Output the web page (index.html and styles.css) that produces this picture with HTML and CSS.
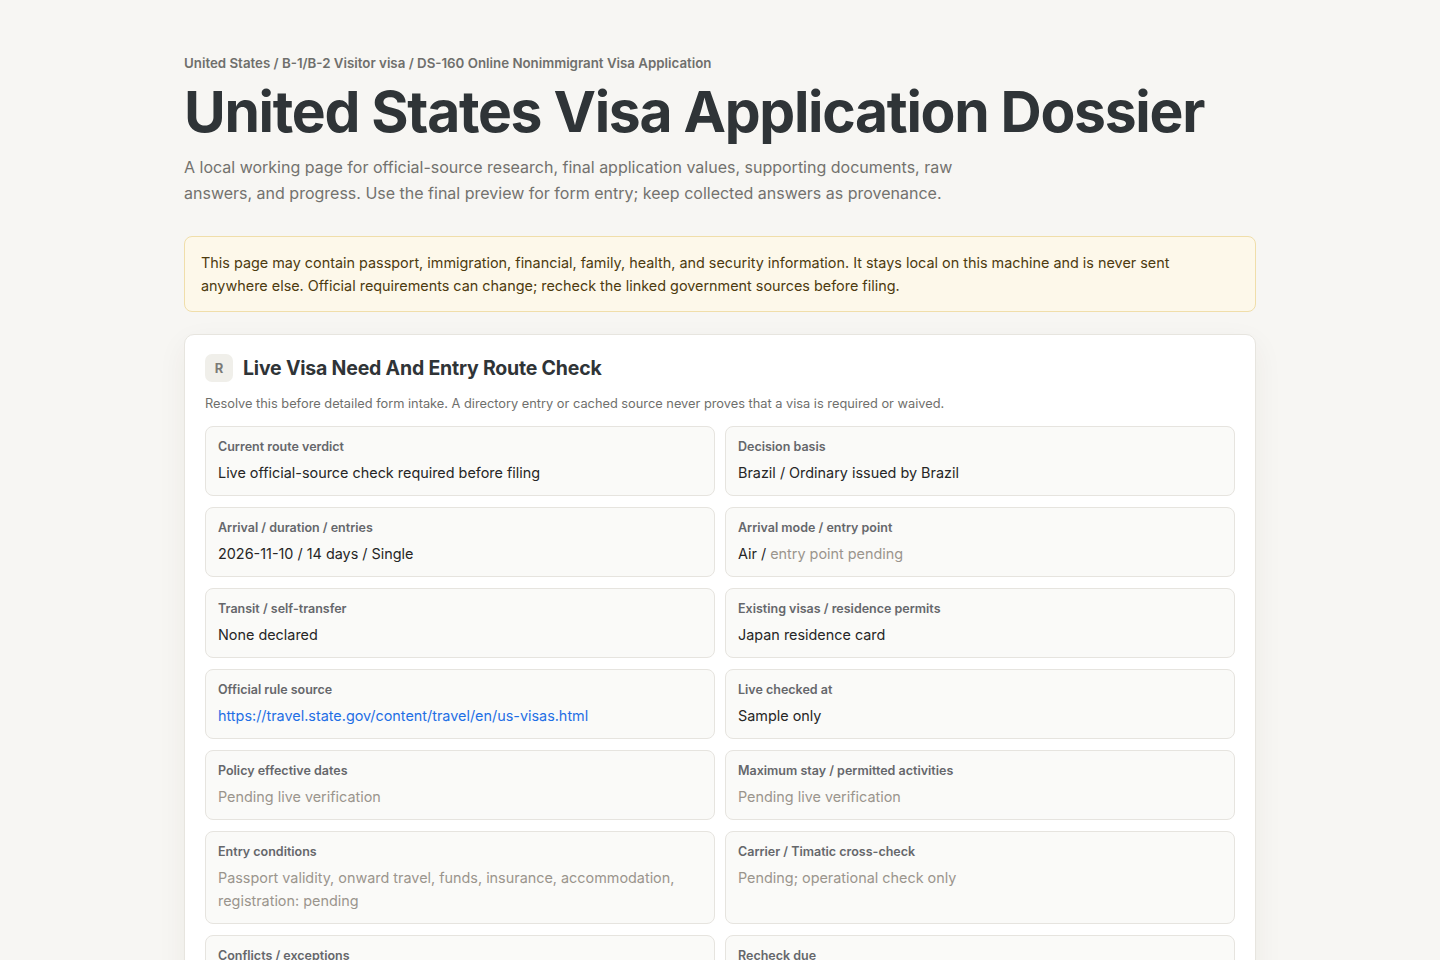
FILE: index.html
```html
<!DOCTYPE html>
<html lang="en">
  <head>
    <meta charset="UTF-8" />
    <meta name="viewport" content="width=device-width, initial-scale=1.0" />
    <title>United States Visa Application Dossier</title>
    <link rel="stylesheet" href="styles.css">
  </head>
  <body>
    <main class="page">
      <div class="crumbs">United States / B-1/B-2 Visitor visa / DS-160 Online Nonimmigrant Visa Application</div>
      <h1>United States Visa Application Dossier</h1>
      <p class="lede">
        A local working page for official-source research, final application values, supporting documents, raw
        answers, and progress. Use the final preview for form entry; keep collected answers as provenance.
      </p>

      <div class="notice">
        This page may contain passport, immigration, financial, family, health, and security information. It stays local on this machine and is never sent
        anywhere else. Official requirements can change; recheck the linked government sources before filing.
      </div>

      <section class="card">
        <div class="card-head">
          <span class="badge">R</span>
          <h2>Live Visa Need And Entry Route Check</h2>
        </div>
        <p class="card-note">Resolve this before detailed form intake. A directory entry or cached source never proves that a visa is required or waived.</p>

        <div class="fields">
          <div class="field">
            <div class="label">Current route verdict</div>
            <div class="value">Live official-source check required before filing</div>
          </div>
          <div class="field">
            <div class="label">Decision basis</div>
            <div class="value">Brazil / Ordinary issued by Brazil</div>
          </div>
          <div class="field">
            <div class="label">Arrival / duration / entries</div>
            <div class="value">2026-11-10 / 14 days / Single</div>
          </div>
          <div class="field">
            <div class="label">Arrival mode / entry point</div>
            <div class="value">Air / <span class="muted">entry point pending</span></div>
          </div>
          <div class="field">
            <div class="label">Transit / self-transfer</div>
            <div class="value">None declared</div>
          </div>
          <div class="field">
            <div class="label">Existing visas / residence permits</div>
            <div class="value">Japan residence card</div>
          </div>
          <div class="field">
            <div class="label">Official rule source</div>
            <div class="value"><a href="https://travel.state.gov/content/travel/en/us-visas.html">https://travel.state.gov/content/travel/en/us-visas.html</a></div>
          </div>
          <div class="field">
            <div class="label">Live checked at</div>
            <div class="value">Sample only</div>
          </div>
          <div class="field">
            <div class="label">Policy effective dates</div>
            <div class="value muted">Pending live verification</div>
          </div>
          <div class="field">
            <div class="label">Maximum stay / permitted activities</div>
            <div class="value muted">Pending live verification</div>
          </div>
          <div class="field">
            <div class="label">Entry conditions</div>
            <div class="value muted">Passport validity, onward travel, funds, insurance, accommodation, registration: pending</div>
          </div>
          <div class="field">
            <div class="label">Carrier / Timatic cross-check</div>
            <div class="value muted">Pending; operational check only</div>
          </div>
          <div class="field">
            <div class="label">Conflicts / exceptions</div>
            <div class="value muted">None recorded</div>
          </div>
          <div class="field">
            <div class="label">Recheck due</div>
            <div class="value muted">Before filing</div>
          </div>
        </div>
      </section>
    </main>
  </body>
</html>
```

FILE: styles.css
```css
body {
  margin: 0;
  background: #f7f6f3;
  color: #2f3437;
  font-family: Inter, "Noto Sans", sans-serif;
}

.page {
  max-width: 1072px;
  margin: 0 auto;
  padding: 54px 0 40px;
}

.crumbs {
  font-size: 13.3px;
  font-weight: 600;
  color: #6f6f6c;
  line-height: 18px;
}

h1 {
  margin: 4px 0 0;
  font-size: 57px;
  line-height: 72px;
  font-weight: 700;
  letter-spacing: -1.3px;
  color: #2f3437;
}

.lede {
  margin: 6px 0 0;
  max-width: 790px;
  font-size: 16px;
  line-height: 26px;
  color: #73726e;
}

.notice {
  margin-top: 30px;
  padding: 14px 16px;
  background: #fdf8ea;
  border: 1px solid #f0deaa;
  border-radius: 8px;
  font-size: 14.4px;
  line-height: 23px;
  color: #4d3b0f;
}

.card {
  margin-top: 22px;
  padding: 19px 20px 20px;
  background: #fff;
  border: 1px solid #e7e5df;
  border-radius: 10px;
  box-shadow: 0 10px 30px rgba(60, 50, 30, 0.06);
}

.card-head {
  display: flex;
  align-items: center;
  gap: 10px;
}

.badge {
  width: 28px;
  height: 28px;
  border-radius: 7px;
  background: #f0efea;
  color: #7b7a76;
  font-size: 13px;
  font-weight: 700;
  display: flex;
  align-items: center;
  justify-content: center;
}

h2 {
  margin: 0;
  font-size: 19.5px;
  font-weight: 700;
  letter-spacing: -0.2px;
  color: #2f3437;
}

.card-note {
  margin: 13px 0 13px;
  font-size: 12.8px;
  line-height: 18px;
  color: #6f6f6c;
}

.fields {
  display: grid;
  grid-template-columns: 1fr 1fr;
  gap: 11px 10px;
}

.field {
  padding: 12px 12px 11px;
  background: #fafaf8;
  border: 1px solid #e6e4df;
  border-radius: 8px;
}

.label {
  font-size: 12.5px;
  font-weight: 600;
  line-height: 16px;
  color: #65676b;
}

.value {
  margin-top: 6px;
  font-size: 14.4px;
  line-height: 23px;
  color: #262626;
}

.muted {
  color: #9a958d;
}

a {
  color: #1f6fe5;
  text-decoration: none;
}
```
